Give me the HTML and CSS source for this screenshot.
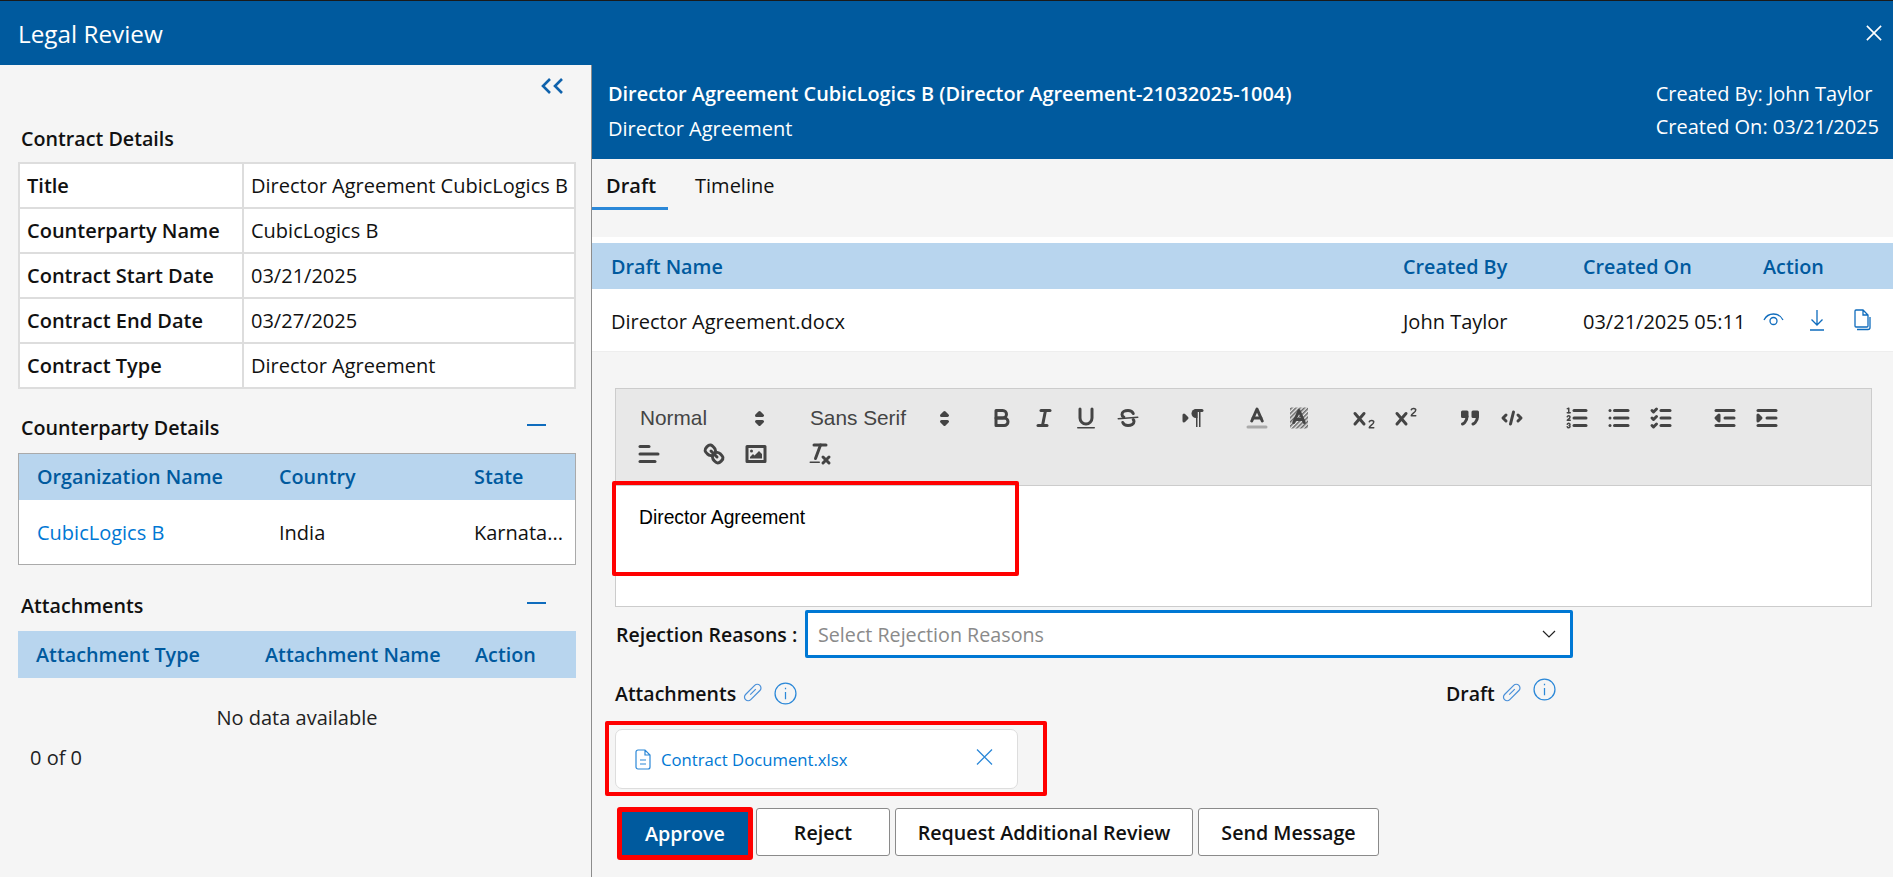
FILE: index.html
```html
<!DOCTYPE html>
<html lang="en">
<head>
    <meta charset="UTF-8">
    <meta name="viewport" content="width=device-width, initial-scale=1.0">
    <title>Legal Review</title>
    <link rel="stylesheet" href="styles.css">
</head>
<body>
    <header class="top-bar">
        <span class="top-title">Legal Review</span>
        <svg class="top-close" viewBox="0 0 18 18"><path d="M1 1l16 16M17 1L1 17"/></svg>
    </header>

    <div class="layout">
        <aside class="side">
            <div class="collapse-row">
                <svg class="collapse-icon" viewBox="0 0 24 18"><path d="M10 2L3 9l7 7M22 2l-7 7 7 7"/></svg>
            </div>

            <h3 class="side-title">Contract Details</h3>
            <table class="details">
                <tr><th>Title</th><td>Director Agreement CubicLogics B</td></tr>
                <tr><th>Counterparty Name</th><td>CubicLogics B</td></tr>
                <tr><th>Contract Start Date</th><td>03/21/2025</td></tr>
                <tr><th>Contract End Date</th><td>03/27/2025</td></tr>
                <tr><th>Contract Type</th><td>Director Agreement</td></tr>
            </table>

            <div class="side-head">
                <h3 class="side-title">Counterparty Details</h3>
                <span class="minus"></span>
            </div>
            <table class="grid-table party">
                <colgroup><col class="party-a"><col class="party-b"><col></colgroup>
                <thead><tr><th>Organization Name</th><th>Country</th><th>State</th></tr></thead>
                <tbody><tr><td><a class="link">CubicLogics B</a></td><td>India</td><td>Karnata...</td></tr></tbody>
            </table>

            <div class="side-head">
                <h3 class="side-title">Attachments</h3>
                <span class="minus"></span>
            </div>
            <table class="grid-table attach">
                <colgroup><col class="attach-a"><col class="attach-b"><col></colgroup>
                <thead><tr><th>Attachment Type</th><th>Attachment Name</th><th>Action</th></tr></thead>
            </table>
            <p class="no-data">No data available</p>
            <p class="pager">0 of 0</p>
        </aside>

        <main class="main">
            <section class="banner">
                <div>
                    <div class="banner-title">Director Agreement CubicLogics B (Director Agreement-21032025-1004)</div>
                    <div class="banner-sub">Director Agreement</div>
                </div>
                <div class="banner-meta">
                    <div>Created By: John Taylor</div>
                    <div>Created On: 03/21/2025</div>
                </div>
            </section>

            <nav class="tabs">
                <a class="tab active">Draft</a>
                <a class="tab">Timeline</a>
            </nav>

            <table class="grid-table drafts">
                <colgroup><col class="draft-a"><col class="draft-b"><col class="draft-b"><col></colgroup>
                <thead><tr><th>Draft Name</th><th>Created By</th><th>Created On</th><th>Action</th></tr></thead>
                <tbody>
                    <tr>
                        <td>Director Agreement.docx</td>
                        <td>John Taylor</td>
                        <td>03/21/2025 05:11</td>
                        <td class="actions">
                            <svg class="act eye" viewBox="0 0 21 14"><path d="M1 7C3 3 6.500 1 10.500 1S18 3 20 7"/><circle cx="10.500" cy="8" r="3.500"/></svg>
                            <svg class="act down" viewBox="0 0 16 22"><path d="M8 1v15M2.500 10.500L8 16l5.500-5.500M1 21h14"/></svg>
                            <svg class="act copy" viewBox="0 0 18 22"><path d="M2 17V2a1 1 0 0 1 1-1h7l5 5v11a1 1 0 0 1-1 1H3a1 1 0 0 1-1-1zM10 1v5h5"/><path d="M4 20.500h11a2 2 0 0 0 2-2V8"/></svg>
                        </td>
                    </tr>
                </tbody>
            </table>

            <div class="editor">
                <div class="toolbar">
                    <div class="tool-row">
                        <span class="picker picker-size">Normal
                            <svg viewBox="0 0 18 18"><polygon class="ql-stroke" points="7 11 9 13 11 11 7 11"/><polygon class="ql-stroke" points="7 7 9 5 11 7 7 7"/></svg>
                        </span>
                        <span class="picker picker-font">Sans Serif
                            <svg viewBox="0 0 18 18"><polygon class="ql-stroke" points="7 11 9 13 11 11 7 11"/><polygon class="ql-stroke" points="7 7 9 5 11 7 7 7"/></svg>
                        </span>
                        <span class="tools">
                            <svg viewBox="0 0 18 18"><path class="ql-stroke" d="M5,4H9.500A2.500,2.500,0,0,1,12,6.500v0A2.500,2.500,0,0,1,9.500,9H5V4Z"/><path class="ql-stroke" d="M5,9h5.500A2.500,2.500,0,0,1,13,11.500v0A2.500,2.500,0,0,1,10.500,14H5V9Z"/></svg>
                            <svg viewBox="0 0 18 18"><line class="ql-stroke" x1="7" x2="13" y1="4" y2="4"/><line class="ql-stroke" x1="5" x2="11" y1="14" y2="14"/><line class="ql-stroke" x1="8" x2="10" y1="14" y2="4"/></svg>
                            <svg viewBox="0 0 18 18"><path class="ql-stroke" d="M5,3V9a4,4,0,0,0,4,4H9a4,4,0,0,0,4-4V3"/><rect class="ql-fill" height="1" rx="0.500" ry="0.500" width="12" x="3" y="15"/></svg>
                            <svg viewBox="0 0 18 18"><line class="ql-stroke ql-thin" x1="15.500" x2="2.500" y1="8.500" y2="9.500"/><path class="ql-stroke" d="M12.500 6C12 4.800 10.600 4 9 4 6.800 4 5 5 5 6.600c0 .8.400 1.400 1.200 1.800M5.500 12c.5 1.200 1.900 2 3.500 2 2.200 0 4-1 4-2.600 0-.5-.2-1-.5-1.300"/></svg>
                        </span>
                        <span class="tools">
                            <svg viewBox="0 0 18 18"><polygon class="ql-stroke ql-fill" points="3 11 5 9 3 7 3 11"/><line class="ql-stroke" x1="15" x2="11" y1="4" y2="4"/><path class="ql-fill" d="M11,3a3,3,0,0,0,0,6h1V3H11Z"/><rect class="ql-fill" height="11" width="1" x="11" y="4"/><rect class="ql-fill" height="11" width="1" x="13" y="4"/></svg>
                        </span>
                        <span class="tools">
                            <svg viewBox="0 0 18 18"><line class="ql-label" x1="3" x2="15" y1="15" y2="15"/><polyline class="ql-stroke" points="5.500 11 9 3 12.500 11"/><line class="ql-stroke" x1="11.630" x2="6.380" y1="9" y2="9"/></svg>
                            <svg viewBox="0 0 18 18">
                                <defs><pattern id="hatch" width="2" height="2" patternUnits="userSpaceOnUse" patternTransform="rotate(45)"><rect width="1" height="2" fill="#666"/></pattern></defs>
                                <rect x="3" y="2" width="12" height="14" fill="url(#hatch)"/>
                                <polyline class="ql-stroke" points="5.500 12 9 4 12.500 12"/><line class="ql-stroke" x1="11.630" x2="6.380" y1="10" y2="10"/>
                            </svg>
                        </span>
                        <span class="tools">
                            <svg viewBox="0 0 18 18"><path class="ql-stroke" d="M3 6l6 7M9 6l-6 7"/><path class="ql-stroke ql-thin" d="M15.500 15.500h-3c0-1.500 3-2 3-3.800 0-1.400-2.600-1.400-3-.2"/></svg>
                            <svg viewBox="0 0 18 18"><path class="ql-stroke" d="M3 6l6 7M9 6l-6 7"/><path class="ql-stroke ql-thin" d="M15.500 7.500h-3c0-1.500 3-2 3-3.800 0-1.400-2.600-1.400-3-.2"/></svg>
                        </span>
                        <span class="tools">
                            <svg viewBox="0 0 18 18"><rect class="ql-stroke ql-fill" height="3" width="3" x="4" y="5"/><rect class="ql-stroke ql-fill" height="3" width="3" x="11" y="5"/><path class="ql-stroke" d="M7,8c0,4.031-3,5-3,5"/><path class="ql-stroke" d="M14,8c0,4.031-3,5-3,5"/></svg>
                            <svg viewBox="0 0 18 18"><polyline class="ql-stroke" points="5 7 3 9 5 11"/><polyline class="ql-stroke" points="13 7 15 9 13 11"/><line class="ql-stroke" x1="10" x2="8" y1="5" y2="13"/></svg>
                        </span>
                        <span class="tools">
                            <svg viewBox="0 0 18 18"><line class="ql-stroke" x1="7" x2="15" y1="4" y2="4"/><line class="ql-stroke" x1="7" x2="15" y1="9" y2="9"/><line class="ql-stroke" x1="7" x2="15" y1="14" y2="14"/><line class="ql-stroke ql-thin" x1="2.500" x2="4.500" y1="5.500" y2="5.500"/><path class="ql-fill" d="M3.500,6A0.500,0.500,0,0,1,3,5.500V3.085l-0.276.138A0.500,0.500,0,0,1,2.053,3c-0.124-.247-0.023-0.324.224-0.447l1-.5A0.500,0.500,0,0,1,4,2.500v3A0.500,0.500,0,0,1,3.500,6Z"/><path class="ql-stroke ql-thin" d="M4.500,10.500h-2c0-.234,1.850-1.076,1.850-2.234A0.959,0.959,0,0,0,2.500,8.156"/><path class="ql-stroke ql-thin" d="M2.500,14.846a0.959,0.959,0,0,0,1.850-.109A0.700,0.700,0,0,0,3.750,14a0.688,0.688,0,0,0,.6-0.736,0.959,0.959,0,0,0-1.850-.109"/></svg>
                            <svg viewBox="0 0 18 18"><line class="ql-stroke" x1="6" x2="15" y1="4" y2="4"/><line class="ql-stroke" x1="6" x2="15" y1="9" y2="9"/><line class="ql-stroke" x1="6" x2="15" y1="14" y2="14"/><line class="ql-stroke" x1="3" x2="3" y1="4" y2="4"/><line class="ql-stroke" x1="3" x2="3" y1="9" y2="9"/><line class="ql-stroke" x1="3" x2="3" y1="14" y2="14"/></svg>
                            <svg viewBox="0 0 18 18"><line class="ql-stroke" x1="9" x2="15" y1="4" y2="4"/><polyline class="ql-stroke" points="3 4 4 5 6 3"/><line class="ql-stroke" x1="9" x2="15" y1="14" y2="14"/><polyline class="ql-stroke" points="3 14 4 15 6 13"/><line class="ql-stroke" x1="9" x2="15" y1="9" y2="9"/><polyline class="ql-stroke" points="3 9 4 10 6 8"/></svg>
                        </span>
                        <span class="tools">
                            <svg viewBox="0 0 18 18"><line class="ql-stroke" x1="3" x2="15" y1="14" y2="14"/><line class="ql-stroke" x1="3" x2="15" y1="4" y2="4"/><line class="ql-stroke" x1="9" x2="15" y1="9" y2="9"/><polyline class="ql-stroke ql-fill" points="5 7 5 11 3 9 5 7"/></svg>
                            <svg viewBox="0 0 18 18"><line class="ql-stroke" x1="3" x2="15" y1="14" y2="14"/><line class="ql-stroke" x1="3" x2="15" y1="4" y2="4"/><line class="ql-stroke" x1="9" x2="15" y1="9" y2="9"/><polyline class="ql-stroke ql-fill" points="3 7 3 11 5 9 3 7"/></svg>
                        </span>
                    </div>
                    <div class="tool-row">
                        <span class="tools">
                            <svg viewBox="0 0 18 18"><line class="ql-stroke" x1="3" x2="15" y1="9" y2="9"/><line class="ql-stroke" x1="3" x2="13" y1="14" y2="14"/><line class="ql-stroke" x1="3" x2="9" y1="4" y2="4"/></svg>
                        </span>
                        <span class="tools">
                            <svg viewBox="0 0 18 18"><line class="ql-stroke" x1="7" x2="11" y1="7" y2="11"/><path class="ql-stroke" d="M8.900,4.577a3.476,3.476,0,0,1,.36,4.679A3.476,3.476,0,0,1,4.577,8.900C3.185,7.500,2.035,6.400,4.217,4.217S7.500,3.185,8.900,4.577Z"/><path class="ql-stroke" d="M13.423,9.100a3.476,3.476,0,0,0-4.679-.36,3.476,3.476,0,0,0,.36,4.679c1.392,1.392,2.500,2.542,4.679.36S14.815,10.500,13.423,9.100Z"/></svg>
                            <svg viewBox="0 0 18 18"><rect class="ql-stroke" height="10" width="12" x="3" y="4"/><circle class="ql-fill" cx="6" cy="7" r="1"/><polyline class="ql-fill" points="5 12 5 11 7 9 8 10 11 7 13 9 13 12 5 12"/></svg>
                        </span>
                        <span class="tools">
                            <svg viewBox="0 0 18 18"><line class="ql-stroke" x1="5" x2="13" y1="3" y2="3"/><line class="ql-stroke" x1="6" x2="9.350" y1="12" y2="3"/><line class="ql-stroke" x1="11" x2="15" y1="11" y2="15"/><line class="ql-stroke" x1="15" x2="11" y1="11" y2="15"/><rect class="ql-fill" height="1" rx="0.500" ry="0.500" width="7" x="2" y="14"/></svg>
                        </span>
                    </div>
                </div>
                <div class="editor-body">
                    <p>Director Agreement</p>
                    <div class="mark mark-text"></div>
                </div>
            </div>

            <div class="reject-row">
                <label class="strong">Rejection Reasons :</label>
                <div class="select">
                    <span>Select Rejection Reasons</span>
                    <svg viewBox="0 0 14 8"><path d="M1 1l6 6 6-6"/></svg>
                </div>
            </div>

            <div class="attach-row">
                <div class="attach-left">
                    <span class="strong">Attachments</span>
                    <svg class="clip" viewBox="0 0 18 18"><path d="M10.500 2.100L2.300 10.300A3.300 3.300 0 0 0 7 15L15.200 6.800A3.300 3.300 0 0 0 10.500 2.100M11.500 5.500L6.500 10.500"/></svg>
                    <svg class="info" viewBox="0 0 22 22"><circle cx="11" cy="11" r="10"/><path d="M11 9.500v7M11 5.500v1.500"/></svg>
                </div>
                <div class="attach-right">
                    <span class="strong">Draft</span>
                    <svg class="clip" viewBox="0 0 18 18"><path d="M10.500 2.100L2.300 10.300A3.300 3.300 0 0 0 7 15L15.200 6.800A3.300 3.300 0 0 0 10.500 2.100M11.500 5.500L6.500 10.500"/></svg>
                    <svg class="info info-up" viewBox="0 0 22 22"><circle cx="11" cy="11" r="10"/><path d="M11 9.500v7M11 5.500v1.500"/></svg>
                </div>
            </div>

            <div class="file-mark">
                <div class="file-card">
                    <svg class="file-icon" viewBox="0 0 16 21"><path d="M1 3a2 2 0 0 1 2-2h7l5 5v12a2 2 0 0 1-2 2H3a2 2 0 0 1-2-2zM10 1v5h5M5 11h6M5 15h6"/></svg>
                    <a class="file-name">Contract Document.xlsx</a>
                    <svg class="file-close" viewBox="0 0 17 16"><path d="M1 .5l15 15M16 .5l-15 15"/></svg>
                </div>
            </div>

            <div class="buttons">
                <button class="btn btn-approve">Approve</button>
                <button class="btn btn-reject">Reject</button>
                <button class="btn btn-request">Request Additional Review</button>
                <button class="btn btn-send">Send Message</button>
            </div>
        </main>
    </div>
</body>
</html>
```

FILE: styles.css
```css
* {
    box-sizing: border-box;
}
body {
    margin: 0;
    height: 877px;
    overflow: hidden;
    font-family: 'Open Sans', 'Noto Sans', sans-serif;
    font-size: 20px;
    color: #111;
    background: #f5f5f5;
}
table {
    border-collapse: collapse;
    table-layout: fixed;
    width: 100%;
}

/* top bar */
.top-bar {
    height: 65px;
    border-top: 1px solid #1a1a1a;
    background: #005a9e;
    color: #fff;
    display: flex;
    align-items: center;
    justify-content: space-between;
    padding: 0 10px 0 18px;
}
.top-title {
    font-size: 24.300px;
}
.top-close {
    width: 18px;
    height: 16px;
    fill: none;
    stroke: #fff;
    stroke-width: 1.8;
}

.layout {
    display: flex;
    height: 812px;
}

/* left panel */
.side {
    width: 592px;
    flex: none;
    padding: 12px 15px 0 18px;
    border-right: 1px solid #8c8c8c;
}
.collapse-row {
    display: flex;
    justify-content: flex-end;
    height: 50px;
    padding-right: 12px;
}
.collapse-icon {
    width: 24px;
    height: 18px;
    fill: none;
    stroke: #0f62ac;
    stroke-width: 2.6;
}
.side-title {
    margin: 0;
    padding-left: 3px;
    font-size: 19.700px;
    font-weight: 600;
    line-height: 24px;
}
.details {
    margin-top: 11px;
    background: #fff;
}
.details th,
.details td {
    height: 45px;
    border: 2px solid #ddd;
    padding: 0 7px;
    text-align: left;
    white-space: nowrap;
}
.details th {
    width: 224px;
    font-weight: 600;
}
.details td {
    font-weight: 400;
}
.side-head {
    display: flex;
    justify-content: space-between;
    align-items: center;
    margin-top: 27px;
    padding-right: 30px;
}
.minus {
    width: 19px;
    height: 2px;
    margin-top: -6px;
    background: #0f6cbd;
}
.grid-table th {
    height: 47px;
    background: #b8d5ee;
    color: #005a9e;
    font-size: 19.800px;
    font-weight: 600;
    text-align: left;
    padding: 0 0 0 18px;
}
.grid-table td {
    background: #fff;
    padding: 0 0 0 18px;
    white-space: nowrap;
}
.party {
    margin-top: 13px;
    margin-bottom: 29px;
    outline: 1px solid #aaa;
    outline-offset: -1px;
}
.party th,
.party td {
    padding-left: 19px;
}
.party td {
    height: 65px;
}
.party-a {
    width: 242px;
}
.party-b {
    width: 195px;
}
.link {
    color: #0078d4;
}
.attach {
    margin-top: 13px;
}
.attach th {
    height: 47px;
}
.attach-a {
    width: 229px;
}
.attach-b {
    width: 210px;
}
.no-data {
    margin: 28px 0 0;
    line-height: 24px;
    text-align: center;
    color: #222;
}
.pager {
    margin: 16px 0 0 12px;
    line-height: 24px;
    color: #222;
}

/* right panel */
.main {
    flex: 1;
    min-width: 0;
}
.banner {
    height: 94px;
    background: #005a9e;
    color: #fff;
    display: flex;
    justify-content: space-between;
    padding: 12px 14px 0 16px;
}
.banner-title {
    font-size: 19.900px;
    font-weight: 600;
    line-height: 34px;
}
.banner-sub {
    line-height: 36px;
}
.banner-meta {
    line-height: 33px;
}
.tabs {
    display: flex;
    height: 51px;
    gap: 13px;
}
.tab {
    display: flex;
    align-items: center;
    padding: 5px 14px 3px;
}
.tab.active {
    font-weight: 600;
    padding: 5px 12px 0 14px;
    border-bottom: 3px solid #2b88d8;
}
.drafts {
    margin-top: 27px;
    border-collapse: separate;
    border-spacing: 0;
    border-top: 6px solid #fff;
}
.drafts th,
.drafts td {
    padding-left: 19px;
}
.drafts th {
    height: 46px;
}
.drafts td {
    height: 63px;
    padding-top: 2px;
    border-bottom: 1px solid #eee;
}
.draft-a {
    width: 792px;
}
.draft-b {
    width: 180px;
}
.drafts td.actions {
    padding-top: 0;
    padding-bottom: 4px;
}
.act {
    fill: none;
    stroke: #0f6cbd;
    stroke-width: 1.3;
    vertical-align: middle;
}
.eye {
    width: 21px;
    height: 14px;
    margin-right: 20px;
}
.down {
    width: 16px;
    height: 22px;
    margin-right: 23px;
}
.copy {
    width: 18px;
    height: 22px;
}

/* editor */
.editor {
    margin: 36px 21px 0 23px;
    height: 219px;
    border: 1px solid #ccc;
    background: #fff;
    display: flex;
    flex-direction: column;
}
.toolbar {
    height: 97px;
    flex: none;
    padding: 11px 12px;
    background: #e8e8e8;
    border-bottom: 1px solid #ccc;
    font-family: 'Liberation Sans', sans-serif;
}
.tool-row {
    display: flex;
    height: 36px;
}
.picker {
    display: flex;
    align-items: center;
    justify-content: space-between;
    width: 147px;
    margin-right: 23px;
    padding-left: 12px;
    font-size: 20.800px;
    color: #444;
}
.picker-font {
    width: 162px;
    margin-right: 21px;
}
.picker svg {
    width: 27px;
    height: 27px;
    margin-right: 2px;
}
.tools {
    display: flex;
    margin-right: 22.500px;
}
.tools svg {
    width: 42px;
    height: 36px;
    padding: 4.500px 7.500px;
}
.ql-stroke {
    fill: none;
    stroke: #444;
    stroke-width: 2;
    stroke-linecap: round;
    stroke-linejoin: round;
}
.ql-thin {
    stroke-width: 1;
}
.ql-fill {
    fill: #444;
}
.ql-label {
    stroke: #aaa;
    stroke-width: 2;
    stroke-linecap: round;
}
.editor-body {
    position: relative;
    flex: 1;
    padding: 21px 23px;
    font-family: 'Liberation Sans', sans-serif;
    font-size: 19.300px;
    color: #000;
}
.editor-body p {
    margin: 0;
}
/* red annotation drawn over the editor */
.mark {
    position: absolute;
    border: 4.500px solid #f00;
    border-radius: 2px;
}
.mark-text {
    left: -4px;
    top: -5px;
    width: 407px;
    height: 95px;
}

/* rejection + attachments */
.strong {
    font-weight: 600;
    font-size: 19.500px;
}
.reject-row {
    display: flex;
    align-items: center;
    margin: 3px 0 0 24px;
    height: 48px;
}
.reject-row label {
    width: 189px;
}
.select {
    width: 768px;
    height: 48px;
    border: 3px solid #0078d4;
    border-radius: 2px;
    background: #fff;
    color: #8a8a8a;
    display: flex;
    align-items: center;
    justify-content: space-between;
    padding: 0 14px 0 10px;
    font-size: 19.700px;
}
.select svg {
    width: 14px;
    height: 8px;
    fill: none;
    stroke: #222;
    stroke-width: 1.200;
}
.attach-row {
    display: flex;
    align-items: center;
    height: 28px;
    margin: 21px 0 0 23px;
}
.attach-left,
.attach-right {
    display: flex;
    align-items: center;
}
.attach-left {
    width: 831px;
}
.clip {
    width: 20px;
    height: 20px;
    margin-left: 7px;
    fill: none;
    stroke: #4a90d9;
    stroke-width: 1.100;
}
.info {
    width: 23px;
    height: 23px;
    margin-left: 11px;
    fill: none;
    stroke: #2b88d8;
    stroke-width: 1.200;
}
.info-up {
    margin-bottom: 8px;
}
.file-mark {
    width: 442px;
    height: 75px;
    margin: 14px 0 0 13px;
    padding: 4px 25px 3px 6px;
    border: 4.500px solid #f00;
    border-radius: 2px;
}
.file-card {
    height: 60px;
    border: 1px solid #ddd;
    border-radius: 7px;
    background: #fff;
    display: flex;
    align-items: center;
    padding-left: 19px;
    color: #0078d4;
    font-size: 16.700px;
}
.file-icon {
    width: 16px;
    height: 21px;
    margin-right: 10px;
    fill: none;
    stroke: #2b88d8;
    stroke-width: 1.200;
}
.file-close {
    width: 17px;
    height: 16px;
    margin-left: auto;
    margin-right: 24px;
    margin-bottom: 4px;
    fill: none;
    stroke: #2b88d8;
    stroke-width: 1.300;
}

/* buttons */
.buttons {
    display: flex;
    align-items: flex-start;
    gap: 5px;
    margin: 11px 0 0 25px;
}
.btn {
    height: 48px;
    margin-top: 1px;
    border: 1px solid #8a8a8a;
    border-radius: 3px;
    background: #fff;
    color: #111;
    font-family: inherit;
    font-size: 19.700px;
    font-weight: 600;
    padding: 0;
}
.btn-approve {
    width: 136px;
    height: 53px;
    margin: 0 -2px 0 0;
    border: 5px solid #f00;
    background: #005a9e;
    color: #fff;
}
.btn-reject {
    width: 134px;
}
.btn-request {
    width: 298px;
}
.btn-send {
    width: 181px;
}
```
